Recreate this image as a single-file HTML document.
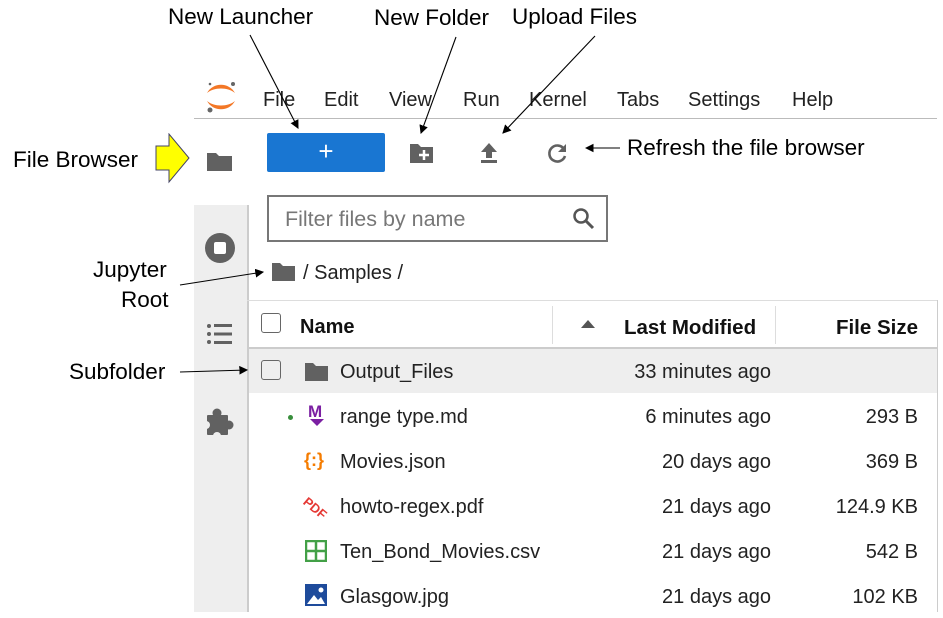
<!DOCTYPE html>
<html><head><style>
body{margin:0;width:943px;height:618px;background:#fff;position:relative;overflow:hidden;font-family:"Liberation Sans",sans-serif;}
.a{position:absolute;font-size:22.5px;color:#000;white-space:nowrap}
.m{position:absolute;font-size:20px;color:#222;top:89px}
.t{position:absolute;font-size:20px;color:#222;white-space:nowrap}
.r{text-align:right}
</style></head><body>
<!-- sidebar -->
<div style="position:absolute;left:194px;top:205px;width:53px;height:407px;background:#eee;border-right:2px solid #ccc"></div>
<div style="position:absolute;left:194px;top:118px;width:743px;height:1px;background:#bbb"></div>
<div style="position:absolute;left:247px;top:300px;width:690px;height:1px;background:#ddd"></div>
<div style="position:absolute;left:247px;top:347px;width:690px;height:2px;background:#ccc"></div>
<div style="position:absolute;left:249px;top:349px;width:688px;height:44px;background:#eee"></div>
<div style="position:absolute;left:937px;top:300px;width:1px;height:312px;background:#ccc"></div>
<div style="position:absolute;left:552px;top:306px;width:1px;height:38px;background:#ddd"></div>
<div style="position:absolute;left:775px;top:306px;width:1px;height:38px;background:#ddd"></div>

<!-- logo -->
<svg style="position:absolute;left:204px;top:80px" width="34" height="34" viewBox="0 0 34 34">
<path d="M3 13 C9 2 25 2 31 13 C24 7 10 7 3 13Z" fill="#f37726"/><path d="M3 21 C9 32 25 32 31 21 C24 27 10 27 3 21Z" fill="#f37726"/>
<circle cx="29" cy="4" r="2" fill="#666"/><circle cx="6" cy="30" r="2.5" fill="#666"/><circle cx="6" cy="4" r="1.3" fill="#666"/></svg>
<div class="m" style="left:263px">File</div><div class="m" style="left:324px">Edit</div><div class="m" style="left:389px">View</div>
<div class="m" style="left:463px">Run</div><div class="m" style="left:529px">Kernel</div><div class="m" style="left:617px">Tabs</div>
<div class="m" style="left:688px">Settings</div><div class="m" style="left:792px">Help</div>

<!-- sidebar icons -->
<svg style="position:absolute;left:206px;top:150px" width="28" height="24"><path d="M1 3h9l3 3h13v15H1z" fill="#616161"/></svg>
<svg style="position:absolute;left:204px;top:232px" width="32" height="32"><circle cx="16" cy="16" r="15" fill="#616161"/><rect x="10" y="10" width="12" height="12" rx="2" fill="#fff"/></svg>
<svg style="position:absolute;left:206px;top:322px" width="28" height="24" fill="#616161"><circle cx="3" cy="4" r="2"/><circle cx="3" cy="12" r="2"/><circle cx="3" cy="20" r="2"/><rect x="8" y="2" width="18" height="3"/><rect x="8" y="10.5" width="18" height="3"/><rect x="8" y="19" width="18" height="3"/></svg>
<svg style="position:absolute;left:205px;top:406px" width="30" height="30" fill="#616161"><rect x="2" y="9" width="21" height="20" rx="1"/><circle cx="12" cy="7" r="4.5"/><circle cx="24" cy="19" r="4.5"/><circle cx="12" cy="30" r="4" fill="#eee"/><circle cx="1" cy="19" r="4" fill="#eee"/></svg>

<!-- toolbar -->
<div style="position:absolute;left:267px;top:133px;width:118px;height:39px;background:#1976d2;border-radius:2px;color:#fff;font-size:26px;text-align:center;line-height:37px">+</div>
<svg style="position:absolute;left:410px;top:142px" width="24" height="22"><path d="M0 2h8l3 3h12v16H0z" fill="#616161"/><path d="M14 8v10M9 13h10" stroke="#fff" stroke-width="2.5"/></svg>
<svg style="position:absolute;left:479px;top:142px" width="20" height="22" fill="#616161"><path d="M10 1l8 9h-5v6H7v-6H2z"/><rect x="2" y="18" width="16" height="3"/></svg>
<svg style="position:absolute;left:547px;top:142px" width="22" height="22"><path d="M17 7A8 8 0 1 0 18 14" fill="none" stroke="#616161" stroke-width="2.6"/><path d="M19 2v8h-8z" fill="#616161"/></svg>

<!-- filter -->
<div style="position:absolute;left:267px;top:195px;width:341px;height:47px;border:2px solid #777;box-sizing:border-box"></div>
<div class="t" style="left:285px;top:207px;color:#777;font-size:21.5px">Filter files by name</div>
<svg style="position:absolute;left:572px;top:207px" width="24" height="24"><circle cx="9" cy="9" r="6.5" fill="none" stroke="#555" stroke-width="2.5"/><path d="M14 14l7 7" stroke="#555" stroke-width="3"/></svg>

<svg style="position:absolute;left:272px;top:262px" width="24" height="20"><path d="M0 1h8l3 3h12v15H0z" fill="#616161"/></svg>
<div class="t" style="left:303px;top:262px">/ Samples /</div>

<!-- header -->
<div style="position:absolute;left:261px;top:313px;width:18px;height:18px;border:1.5px solid #666;border-radius:3px"></div>
<div class="t" style="left:300px;top:316px;font-weight:bold;color:#111">Name</div>
<svg style="position:absolute;left:581px;top:320px" width="14" height="8"><path d="M0 8L7 0l7 8z" fill="#555"/></svg>
<div class="t" style="left:624px;top:316px;font-weight:bold;color:#111;font-size:20.5px">Last Modified</div>
<div class="t r" style="left:790px;width:128px;top:316px;font-weight:bold;color:#111;font-size:20.5px">File Size</div>

<div style="position:absolute;left:261px;top:360px;width:18px;height:18px;border:1.5px solid #666;border-radius:3px"></div>
<svg style="position:absolute;left:305px;top:362px" width="24" height="20"><path d="M0 1h8l3 3h12v15H0z" fill="#616161"/></svg>

<div style="position:absolute;left:288px;top:415px;width:5px;height:5px;border-radius:50%;background:#388e3c"></div>
<div style="position:absolute;left:308px;top:402px;font-size:17px;font-weight:bold;color:#7b1fa2">M</div>
<svg style="position:absolute;left:310px;top:419px" width="14" height="8"><path d="M0 0h14L7 7z" fill="#7b1fa2"/></svg>
<div style="position:absolute;left:304px;top:450px;font-size:18px;font-weight:bold;color:#f57c00">{:}</div>
<div style="position:absolute;left:310px;top:494px;font-size:13px;font-weight:bold;color:#e53935;transform:rotate(40deg);transform-origin:left top">PDF</div>
<svg style="position:absolute;left:305px;top:540px" width="22" height="22"><rect x="1" y="1" width="20" height="20" fill="none" stroke="#43a047" stroke-width="2.5"/><path d="M11 1v20M1 11h20" stroke="#43a047" stroke-width="2.5"/></svg>
<svg style="position:absolute;left:305px;top:584px" width="22" height="22"><rect width="22" height="22" fill="#1e4b9b"/><path d="M2 20l7-9 4 5 3-3 4 7z" fill="#fff"/><circle cx="16" cy="6" r="2.5" fill="#fff"/></svg>

<div class="t" style="left:340px;top:361px">Output_Files</div>
<div class="t" style="left:340px;top:406px">range type.md</div>
<div class="t" style="left:340px;top:451px">Movies.json</div>
<div class="t" style="left:340px;top:496px">howto-regex.pdf</div>
<div class="t" style="left:340px;top:541px">Ten_Bond_Movies.csv</div>
<div class="t" style="left:340px;top:586px">Glasgow.jpg</div>

<div class="t r" style="left:560px;width:211px;top:361px">33 minutes ago</div>
<div class="t r" style="left:560px;width:211px;top:406px">6 minutes ago</div>
<div class="t r" style="left:560px;width:211px;top:451px">20 days ago</div>
<div class="t r" style="left:560px;width:211px;top:496px">21 days ago</div>
<div class="t r" style="left:560px;width:211px;top:541px">21 days ago</div>
<div class="t r" style="left:560px;width:211px;top:586px">21 days ago</div>
<div class="t r" style="left:790px;width:128px;top:406px">293 B</div>
<div class="t r" style="left:790px;width:128px;top:451px">369 B</div>
<div class="t r" style="left:790px;width:128px;top:496px">124.9 KB</div>
<div class="t r" style="left:790px;width:128px;top:541px">542 B</div>
<div class="t r" style="left:790px;width:128px;top:586px">102 KB</div>

<!-- annotations -->
<div class="a" style="left:168px;top:4px">New Launcher</div>
<div class="a" style="left:374px;top:5px">New Folder</div>
<div class="a" style="left:512px;top:4px">Upload Files</div>
<div class="a" style="left:627px;top:135px">Refresh the file browser</div>
<div class="a" style="left:13px;top:147px">File Browser</div>
<div class="a" style="left:93px;top:257px">Jupyter</div>
<div class="a" style="left:121px;top:287px">Root</div>
<div class="a" style="left:69px;top:359px">Subfolder</div>
<svg style="position:absolute;left:155px;top:133px" width="36" height="52"><path d="M1 13h13V1l20 24-20 24V37H1z" fill="#ff0" stroke="#446" stroke-width="1"/></svg>
<svg style="position:absolute;left:0;top:0" width="943" height="618">
<defs><marker id="h" markerWidth="8" markerHeight="8" refX="7" refY="4" orient="auto"><path d="M0 0L8 4L0 8z" fill="#000"/></marker></defs>
<g stroke="#000" stroke-width="1.1" marker-end="url(#h)">
<line x1="250" y1="35" x2="298" y2="128"/><line x1="456" y1="37" x2="421" y2="133"/><line x1="595" y1="36" x2="503" y2="133"/>
<line x1="620" y1="148" x2="586" y2="148"/><line x1="180" y1="285" x2="263" y2="272"/><line x1="180" y1="372" x2="247" y2="370"/>
</g></svg>
</body></html>
